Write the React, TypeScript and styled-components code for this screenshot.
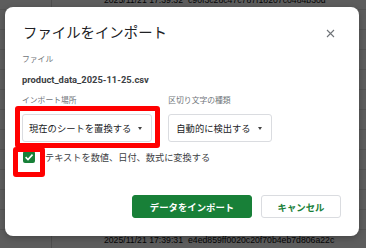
import styled, { createGlobalStyle } from "styled-components"

const GlobalStyle = createGlobalStyle`
  html, body {
    margin: 0;
    padding: 0;
  }
  body {
    width: 366px;
    height: 248px;
    overflow: hidden;
    background: #5d5d5d;
    font-family: Roboto, "Noto Sans CJK JP", sans-serif;
  }
`

const sheetRows = [
  { date: "2025/11/21 17:39:32", id: "c90f3c28c47c787f18207c0484b30d" },
  ...Array.from({ length: 11 }, () => ({ date: "", id: "" })),
  { date: "2025/11/21 17:39:31", id: "e4ed859ff0020c20f70b4eb7d806a22c" },
]

function App() {
  return (
    <Page>
      <GlobalStyle />
      <Sheet>
        {sheetRows.map((row, i) => (
          <SheetRow key={i}>
            <Cell className="first" />
            <Cell $align="right">{row.date}</Cell>
            <Cell>{row.id}</Cell>
          </SheetRow>
        ))}
      </Sheet>

      <Dialog>
        <Header>
          <Title>ファイルをインポート</Title>
          <CloseButton aria-label="閉じる">
            <svg width="9" height="9" viewBox="0 0 9 9">
              <path d="M1 1L8 8M8 1L1 8" stroke="#6f7378" strokeWidth="1.1" />
            </svg>
          </CloseButton>
        </Header>

        <FieldLabel $top={10}>ファイル</FieldLabel>
        <FileName>product_data_2025-11-25.csv</FileName>

        <Fields>
          <Field>
            <FieldLabel>インポート場所</FieldLabel>
            <Select $padLeft={6}>
              現在のシートを置換する
              <Caret />
            </Select>
          </Field>
          <Field>
            <FieldLabel>区切り文字の種類</FieldLabel>
            <Select $padLeft={7}>
              自動的に検出する
              <Caret />
            </Select>
          </Field>
        </Fields>

        <CheckRow>
          <CheckBox>
            <svg width="10" height="10" viewBox="0 0 10 10">
              <path d="M1.6 5.2L4 7.5L8.5 2.6" fill="none" stroke="#fff" strokeWidth="1.6" />
            </svg>
          </CheckBox>
          テキストを数値、日付、数式に変換する
        </CheckRow>

        <Actions>
          <Button $primary>データをインポート</Button>
          <Button>キャンセル</Button>
        </Actions>
      </Dialog>

      <Highlight style={{ left: 15, top: 106, width: 145, height: 42 }} />
      <Highlight style={{ left: 13, top: 147, width: 32, height: 30 }} />
    </Page>
  )
}

const Page = styled.div`
  position: relative;
  width: 366px;
  height: 248px;
  overflow: hidden;
  background: #5d5d5d;
`

const Sheet = styled.div`
  display: flex;
  flex-direction: column;
  margin-top: -10px;
`

const SheetRow = styled.div`
  display: grid;
  grid-template-columns: 52px 133px 1fr;
  height: 20px;
  box-sizing: border-box;
  border-bottom: 1px solid #535353;
`

const Cell = styled.div<{ $align?: "left" | "right" }>`
  font-family: "Liberation Sans", Arial, sans-serif;
  font-size: 8.7px;
  line-height: 21px;
  color: #050505;
  white-space: nowrap;
  overflow: hidden;
  text-align: ${(p) => p.$align ?? "left"};
  padding: ${(p) => (p.$align === "right" ? "0 2px 0 0" : "0 0 0 3px")};

  &.first {
    border-right: 1px solid #4e4e4e;
  }
`

const Dialog = styled.div`
  position: absolute;
  left: 5px;
  top: 7px;
  width: 354px;
  height: 229px;
  box-sizing: border-box;
  background: #fff;
  border-radius: 8px;
  box-shadow: 0 2px 6px rgba(0, 0, 0, 0.25);
  padding: 16px 18px 18px 17px;
  display: flex;
  flex-direction: column;
`

const Header = styled.div`
  display: flex;
  align-items: center;
  justify-content: space-between;
  height: 21px;
`

const Title = styled.h1`
  margin: 0 0 0 1px;
  font-size: 14.4px;
  font-weight: 400;
  color: #202124;
  line-height: 21px;
`

const CloseButton = styled.button`
  width: 20px;
  height: 20px;
  padding: 0;
  border: none;
  background: none;
  display: flex;
  align-items: center;
  justify-content: center;
  margin-right: 1px;
`

const FieldLabel = styled.div<{ $top?: number }>`
  font-size: 7.8px;
  line-height: 12px;
  color: #70757a;
  margin-top: ${(p) => p.$top ?? 0}px;
`

const FileName = styled.div`
  margin-top: 7px;
  font-size: 9.4px;
  font-weight: 700;
  line-height: 14px;
  color: #3c4043;
`

const Fields = styled.div`
  display: flex;
  gap: 16px;
  margin-top: 8px;
`

const Field = styled.div`
  display: flex;
  flex-direction: column;
  gap: 7px;
`

const Select = styled.div<{ $padLeft: number }>`
  display: inline-flex;
  align-items: center;
  gap: 7px;
  height: 28px;
  box-sizing: border-box;
  padding: 0 9px 0 ${(p) => p.$padLeft}px;
  border: 1px solid #dadce0;
  border-radius: 3px;
  font-size: 9.3px;
  color: #202124;
  white-space: nowrap;
`

const Caret = styled.span`
  width: 0;
  height: 0;
  border-left: 2.5px solid transparent;
  border-right: 2.5px solid transparent;
  border-top: 3px solid #444;
  margin-top: 1px;
`

const CheckRow = styled.label`
  display: flex;
  align-items: center;
  gap: 10px;
  height: 16px;
  margin-top: 7px;
  padding-left: 1px;
  font-size: 9.2px;
  color: #3c4043;
  white-space: nowrap;
`

const CheckBox = styled.span`
  width: 12px;
  height: 12px;
  border-radius: 2px;
  background: #188038;
  display: flex;
  align-items: center;
  justify-content: center;
`

const Actions = styled.div`
  display: flex;
  justify-content: flex-end;
  gap: 9px;
  margin-top: auto;
`

const Button = styled.button<{ $primary?: boolean }>`
  height: 23px;
  box-sizing: border-box;
  width: ${(p) => (p.$primary ? 120 : 80)}px;
  border-radius: 3px;
  border: 1px solid ${(p) => (p.$primary ? "#188038" : "#dadce0")};
  background: ${(p) => (p.$primary ? "#188038" : "#fff")};
  color: ${(p) => (p.$primary ? "#fff" : "#188038")};
  font-family: Roboto, "Noto Sans CJK JP", sans-serif;
  font-size: 9.4px;
  font-weight: 700;
  padding: 0;
`

const Highlight = styled.div`
  position: absolute;
  box-sizing: border-box;
  border: 5px solid #ff0000;
  border-radius: 3px;
`

export default App
